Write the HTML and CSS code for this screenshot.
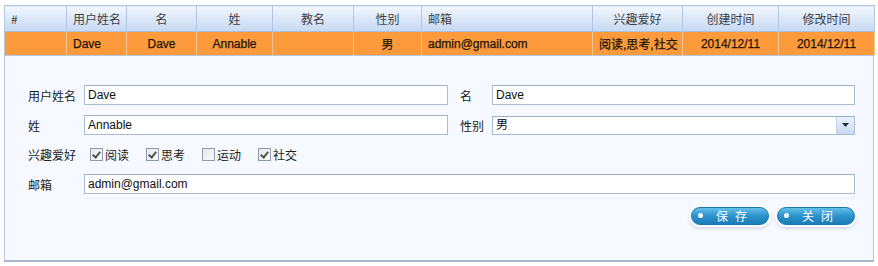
FILE: index.html
```html
<!DOCTYPE html>
<html lang="zh-CN">
<head>
    <meta charset="UTF-8">
    <title>用户管理</title>
    <link rel="stylesheet" href="styles.css">
</head>
<body>
    <div class="wrap">
        <table class="grid">
            <colgroup>
                <col class="c-num">
                <col class="c-user">
                <col class="c-first">
                <col class="c-last">
                <col class="c-nick">
                <col class="c-sex">
                <col class="c-mail">
                <col class="c-hobby">
                <col class="c-date">
                <col class="c-date2">
            </colgroup>
            <thead>
                <tr>
                    <th class="left">#</th>
                    <th class="left">用户姓名</th>
                    <th>名</th>
                    <th>姓</th>
                    <th>教名</th>
                    <th>性别</th>
                    <th class="left">邮箱</th>
                    <th>兴趣爱好</th>
                    <th>创建时间</th>
                    <th>修改时间</th>
                </tr>
            </thead>
            <tbody>
                <tr class="selected">
                    <td class="left"></td>
                    <td class="left">Dave</td>
                    <td>Dave</td>
                    <td>Annable</td>
                    <td></td>
                    <td>男</td>
                    <td class="left">admin@gmail.com</td>
                    <td>阅读,思考,社交</td>
                    <td>2014/12/11</td>
                    <td>2014/12/11</td>
                </tr>
            </tbody>
        </table>

        <!-- 编辑面板 -->
        <div class="panel">
            <div class="form">
                <label class="lbl">用户姓名</label>
                <div class="txt">Dave</div>
                <label class="lbl right">名</label>
                <div class="txt">Dave</div>

                <label class="lbl">姓</label>
                <div class="txt">Annable</div>
                <label class="lbl right">性别</label>
                <div class="txt combo">
                    <span>男</span>
                    <span class="arrow"><svg width="7" height="4" viewBox="0 0 7 4"><path d="M0 0h7L3.5 4z" fill="#1d2a3a"/></svg></span>
                </div>

                <label class="lbl">兴趣爱好</label>
                <div class="checks">
                    <span class="chk on"></span><span class="chk-text">阅读</span>
                    <span class="chk on"></span><span class="chk-text">思考</span>
                    <span class="chk"></span><span class="chk-text">运动</span>
                    <span class="chk on"></span><span class="chk-text">社交</span>
                </div>

                <label class="lbl">邮箱</label>
                <div class="txt wide">admin@gmail.com</div>
            </div>

            <div class="line"></div>

            <div class="actions">
                <button class="btn"><i></i>保存</button>
                <button class="btn"><i></i>关闭</button>
            </div>
        </div>
    </div>
</body>
</html>
```

FILE: styles.css
```css
body {
    margin: 0;
    background: #ffffff;
    font-family: "Liberation Sans", "Noto Sans CJK SC", sans-serif;
    font-size: 12px;
    color: #222;
}

.wrap {
    padding: 5px 4px 0 4px;
    width: 870px;
}

/* 表格 */
.grid {
    width: 870px;
    border-collapse: collapse;
    table-layout: fixed;
    border: 1px solid #b3c8e4;
}

.c-num { width: 62px; }
.c-user { width: 60px; }
.c-first { width: 70px; }
.c-last { width: 76px; }
.c-nick { width: 81px; }
.c-sex { width: 68px; }
.c-mail { width: 171px; }
.c-hobby { width: 90px; }
.c-date { width: 96px; }
.c-date2 { width: 96px; }

.grid th {
    height: 25px;
    padding: 0 2px;
    font-weight: normal;
    color: #3a3f47;
    font-family: "Noto Sans CJK SC", sans-serif;
    background: linear-gradient(to bottom, #f2f7fd, #d9e6f7 55%, #c6d8f1);
    border-right: 1px solid #b1c6e2;
    border-bottom: 1px solid #aac0de;
    text-align: center;
    white-space: nowrap;
}

.grid td {
    height: 23px;
    padding: 0 6px;
    text-align: center;
    border-right: 1px solid #f7c896;
    white-space: nowrap;
    overflow: hidden;
}

.grid .left {
    text-align: left;
}

.grid th.left {
    padding-left: 6px;
}

.selected td {
    background: #fd9b3c;
    color: #1e1408;
    -webkit-text-stroke: 0.25px #1e1408;
}

/* 编辑面板 */
.panel {
    background: #f6f9ff;
    border-left: 1px solid #b9c8de;
    border-right: 1px solid #b9c8de;
    border-bottom: 2px solid #a9b7cb;
    height: 206px;
    box-sizing: border-box;
    padding-top: 29px;
}

.form {
    display: grid;
    grid-template-columns: 57px 364px 44px 363px;
    grid-template-rows: 20px 20px 19px 20px;
    row-gap: 10px;
    padding-left: 22px;
    align-items: center;
}

.lbl {
    font-family: "Noto Sans CJK SC", sans-serif;
    color: #222;
    padding-left: 1px;
}

.lbl.right {
    padding-left: 12px;
}

.txt {
    height: 20px;
    box-sizing: border-box;
    border: 1px solid #a9bcd5;
    border-top-color: #9db1cc;
    background: #fff;
    padding: 0 3px;
    line-height: 18px;
    color: #111;
}

.combo {
    display: flex;
    justify-content: space-between;
    padding-right: 0;
    height: 19px;
    line-height: 17px;
}

.arrow {
    width: 17px;
    height: 17px;
    display: flex;
    align-items: center;
    justify-content: center;
    background: linear-gradient(to bottom, #e9f1fb, #c9daf0);
    border-left: 1px solid #c5d4e8;
}

.wide {
    grid-column: 2 / 5;
}

.checks {
    grid-column: 2 / 5;
    display: flex;
    align-items: center;
    padding-left: 6px;
    font-family: "Noto Sans CJK SC", sans-serif;
}

.chk {
    width: 11px;
    height: 11px;
    border: 1px solid #8e9aab;
    background: linear-gradient(to bottom right, #e4e6ea, #fbfbfc);
    position: relative;
    margin-right: 2px;
}

.chk.on::after {
    content: "";
    position: absolute;
    left: 3px;
    top: 1px;
    width: 3px;
    height: 6px;
    border-right: 2px solid #4c5a49;
    border-bottom: 2px solid #4c5a49;
    transform: rotate(40deg);
}

.chk-text {
    margin-right: 17px;
}

.line {
    margin: 4px 18px 0 80px;
    border-top: 1px solid #eaf0f8;
}

.actions {
    display: flex;
    justify-content: flex-end;
    gap: 8px;
    padding: 8px 18px 0 0;
}

.btn {
    position: relative;
    width: 78px;
    height: 18px;
    border: 1px solid #1a78ad;
    border-radius: 9px;
    background: linear-gradient(to bottom, #63c0ea, #2b93cc 50%, #1b7cb6);
    box-shadow: 0 0 0 2px #ffffff, 0 2px 3px 2px rgba(120, 140, 170, 0.25);
    color: #fff;
    font-family: "Noto Sans CJK SC", sans-serif;
    font-size: 12px;
    letter-spacing: 7px;
    padding: 0 0 0 10px;
    line-height: 16px;
}

.btn i {
    position: absolute;
    left: 6px;
    top: 5px;
    width: 5px;
    height: 5px;
    border-radius: 50%;
    background: #f4fbff;
}
```
